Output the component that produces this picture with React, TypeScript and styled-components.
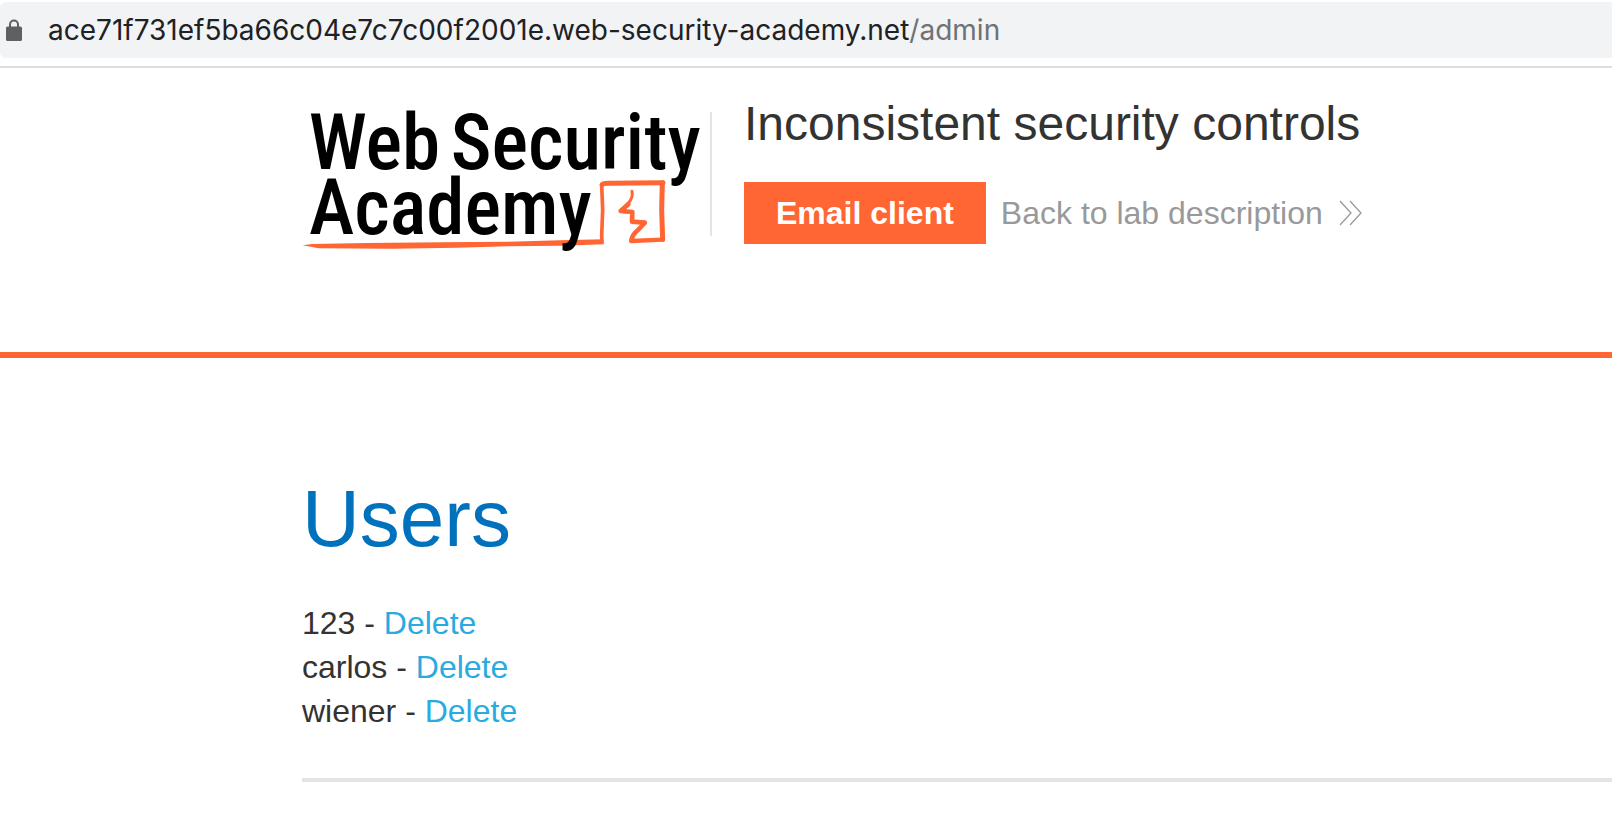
import React from 'react';
import styled, { createGlobalStyle } from 'styled-components';

const GlobalStyle = createGlobalStyle`
  *, *::before, *::after { box-sizing: border-box; }
  body {
    margin: 0;
    background: #fff;
    color: #333332;
    font-family: "Liberation Sans", Arial, sans-serif;
    overflow-x: hidden;
  }
`;

const Toolbar = styled.div`
  padding: 2px 0 8px;
  border-bottom: 2px solid #dcdce3;
`;

const AddressBar = styled.div`
  display: flex;
  align-items: center;
  gap: 26px;
  height: 56px;
  padding-left: 6px;
  border-radius: 6px 0 0 6px;
  background: #f1f3f4;
`;

const LockIcon = styled.svg`
  flex: none;
  width: 16px;
  height: 22px;
`;

const Address = styled.span`
  font-family: Inter, sans-serif;
  font-size: 28px;
  line-height: 36px;
  color: #202124;
  white-space: nowrap;
`;

const AddressPath = styled.span`
  color: #6f7174;
`;

const LabHeader = styled.header`
  display: flex;
  align-items: flex-start;
  padding: 32px 0 97px 302px;
  border-bottom: 6px solid #ff6633;
`;

const LogoLink = styled.a`
  flex: none;
  display: block;
  padding-top: 10px;
`;

const Logo = styled.svg`
  display: block;
  width: 400px;
  height: 145px;
  overflow: visible;
`;

const LogoWord = styled.text`
  font-family: "Roboto Condensed", Roboto, sans-serif;
  font-weight: 500;
  font-size: 231px;
  fill: #000;
`;

const LabInfo = styled.div`
  position: relative;
  padding-left: 42px;

  &::before {
    content: "";
    position: absolute;
    left: 8px;
    top: 12px;
    width: 2px;
    height: 124px;
    background: #e4e4e4;
  }
`;

const LabTitle = styled.h2`
  margin: 0 0 34px;
  font-size: 48px;
  line-height: 48px;
  font-weight: 400;
  white-space: nowrap;
`;

const Actions = styled.div`
  display: flex;
  align-items: center;
  gap: 15px;
`;

const EmailButton = styled.button`
  height: 62px;
  padding: 0 32px;
  border: 0;
  background: #ff6633;
  color: #fff;
  font: 700 32px/44px "Liberation Sans", Arial, sans-serif;
  white-space: nowrap;
  cursor: pointer;
`;

const BackLink = styled.a`
  display: flex;
  align-items: center;
  gap: 16px;
  font-size: 32px;
  line-height: 44px;
  color: #999;
  text-decoration: none;
  white-space: nowrap;
`;

const Chevrons = styled.svg`
  width: 24px;
  height: 26px;
`;

const Main = styled.main`
  padding: 115px 0 38px 302px;
`;

const PageTitle = styled.h1`
  margin: 0 0 36px;
  font-size: 80px;
  line-height: 92px;
  font-weight: 400;
  color: #0071bc;
`;

const UserList = styled.ul`
  margin: 0 0 45px;
  padding: 0;
  list-style: none;
`;

const UserRow = styled.li`
  font-size: 32px;
  line-height: 44px;
`;

const DeleteLink = styled.a`
  color: #29abe2;
  text-decoration: none;
`;

const Divider = styled.hr`
  margin: 0;
  border: 0;
  height: 4px;
  background: #e4e4e4;
`;

const users = ['123', 'carlos', 'wiener'];

export default function App() {
  return (
    <>
      <GlobalStyle />
      <Toolbar>
        <AddressBar>
          <LockIcon viewBox="0 0 16 22" aria-hidden="true">
            <path d="M4 9V5.5a4 4 0 0 1 8 0V9" fill="none" stroke="#5f6062" strokeWidth="2" />
            <rect x="0" y="7.5" width="16" height="14.5" rx="1.6" fill="#5f6062" />
          </LockIcon>
          <Address>
            ace71f731ef5ba66c04e7c7c00f2001e.web-security-academy.net<AddressPath>/admin</AddressPath>
          </Address>
        </AddressBar>
      </Toolbar>

      <LabHeader>
        <LogoLink href="#" aria-label="Web Security Academy">
          <Logo viewBox="0 0 1200 435">
            <path
              d="M2 406 L30 402 L196 399 L420 397 L620 395 L774 391 L904 388 L905 403 L774 407 L620 409 L464 413 L270 416 L50 415 Z"
              fill="#ff6633"
            />
            <g fill="none" stroke="#ff6633" strokeLinejoin="round" strokeLinecap="round">
              <path d="M900 396 L899 376 L902 300 L899 224" strokeWidth="11" />
              <path d="M900 224 Q900 220 920 220 L1083 218" strokeWidth="15" />
              <path d="M1081 218 L1079 300 L1082 388" strokeWidth="15" />
              <path d="M1082 389 L988 393" strokeWidth="13" />
              <path d="M988 392 Q990 374 1008 360 L1028 339" strokeWidth="14" />
              <path d="M1028 338 L990 335 L991 306 L956 303 L979 283" strokeWidth="14" />
              <path d="M956 303 L978 280 Q994 264 990 244" strokeWidth="9" />
            </g>
            <LogoWord x="20" y="177">Web</LogoWord>
            <LogoWord x="446" y="177">Security</LogoWord>
            <LogoWord x="21" y="372">Academy</LogoWord>
          </Logo>
        </LogoLink>
        <LabInfo>
          <LabTitle>Inconsistent security controls</LabTitle>
          <Actions>
            <EmailButton type="button">Email client</EmailButton>
            <BackLink href="#">
              Back to lab description
              <Chevrons viewBox="0 0 24 26" fill="none" stroke="#999" strokeWidth="1.3" aria-hidden="true">
                <path d="M1 1l11 12L1 25M11 1l11 12-11 12" />
              </Chevrons>
            </BackLink>
          </Actions>
        </LabInfo>
      </LabHeader>

      <Main>
        <PageTitle>Users</PageTitle>
        <UserList>
          {users.map((name) => (
            <UserRow key={name}>
              {name} - <DeleteLink href="#">Delete</DeleteLink>
            </UserRow>
          ))}
        </UserList>
        <Divider />
      </Main>
    </>
  );
}
